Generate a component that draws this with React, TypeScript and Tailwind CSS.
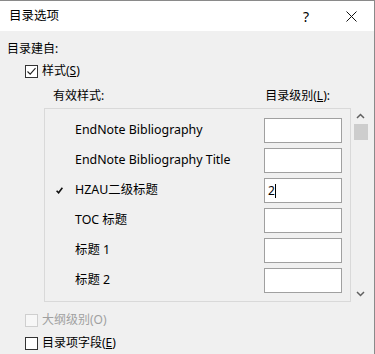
import React from 'react';

const font = { fontFamily: '"Noto Sans", "Noto Sans CJK SC", sans-serif' };

const rows = [
  { name: 'EndNote Bibliography', level: '', used: false },
  { name: 'EndNote Bibliography Title', level: '', used: false },
  { name: 'HZAU二级标题', level: '2', used: true },
  { name: 'TOC 标题', level: '', used: false },
  { name: '标题 1', level: '', used: false },
  { name: '标题 2', level: '', used: false },
];

const Checkbox = ({ checked, disabled }: { checked?: boolean; disabled?: boolean }) => (
  <div
    className={
      'w-[13px] h-[13px] border flex items-center justify-center ' +
      (disabled ? 'border-[#cfcfcf] bg-[#f7f7f7]' : 'border-[#333333] bg-white')
    }
  >
    {checked && (
      <svg width="11" height="11" viewBox="0 0 11 11">
        <path d="M1.5 5.5 L4.2 8.2 L9.5 2.2" fill="none" stroke="#222" strokeWidth="1.1" />
      </svg>
    )}
  </div>
);

const App = () => {
  return (
    <div
      className="w-[375px] h-[354px] bg-[#f0f0f0] border-r border-t border-[#8a8a8a] overflow-hidden text-[12px] text-black flex flex-col"
      style={font}
    >
      <div className="h-[30px] bg-white flex items-center pl-[9px] pr-[17px] shrink-0">
        <span className="text-[12.5px]">目录选项</span>
        <span className="ml-auto mr-[37px] text-[14px]">?</span>
        <svg width="11" height="11" viewBox="0 0 11 11">
          <path d="M0.5 0.5 L10.5 10.5 M10.5 0.5 L0.5 10.5" stroke="#111" strokeWidth="1" />
        </svg>
      </div>

      <div className="pl-[7px] mt-[10px] leading-[16px]">目录建自:</div>

      <div className="flex items-center h-[16px] mt-[6px] pl-[25px] gap-[4px]">
        <Checkbox checked />
        <span>
          样式(<span className="underline">S</span>)
        </span>
      </div>

      <div className="flex h-[16px] items-center mt-[9px] pl-[53px]">
        <span>有效样式:</span>
        <span className="ml-[161px]">
          目录级别(<span className="underline">L</span>):
        </span>
      </div>

      <div className="flex mt-[4px] ml-[44px]">
        <div className="w-[307px] h-[194px] border border-[#d9d9d9] pt-[9px] flex flex-col gap-[5px] overflow-hidden">
          {rows.map((r) => (
            <div key={r.name} className="flex items-center h-[25px] shrink-0">
              <div className="w-[30px] pl-[11px] flex items-center">
                {r.used && (
                  <svg width="7" height="7" viewBox="0 0 7 7">
                    <path d="M0.6 3.8 L2.6 5.8 L6.4 0.8" fill="none" stroke="#111" strokeWidth="1.6" />
                  </svg>
                )}
              </div>
              <span className="flex-1 text-[12.4px]">{r.name}</span>
              <div className="w-[78px] h-[25px] border border-[#a0a0a0] bg-white mr-[8px] flex items-center pl-[3px]">
                {r.level && (
                  <>
                    <span>{r.level}</span>
                    <span className="w-px h-[14px] bg-black" />
                  </>
                )}
              </div>
            </div>
          ))}
        </div>

        <div className="w-[17px] h-[194px] ml-[1px] flex flex-col items-center">
          <div className="h-[16px] flex items-center justify-center">
            <svg width="9" height="6" viewBox="0 0 9 6">
              <path d="M1 5 L4.5 1.5 L8 5" fill="none" stroke="#606060" strokeWidth="1.5" />
            </svg>
          </div>
          <div className="w-[14px] h-[16px] bg-[#cdcdcd]" />
          <div className="mt-auto h-[16px] flex items-center justify-center">
            <svg width="9" height="6" viewBox="0 0 9 6">
              <path d="M1 1 L4.5 4.5 L8 1" fill="none" stroke="#606060" strokeWidth="1.5" />
            </svg>
          </div>
        </div>
      </div>

      <div className="flex items-center h-[16px] mt-[10px] pl-[25px] gap-[4px] text-[#a0a0a0]">
        <Checkbox disabled />
        <span>大纲级别(O)</span>
      </div>

      <div className="flex items-center h-[16px] mt-[7px] pl-[25px] gap-[4px]">
        <Checkbox />
        <span>
          目录项字段(<span className="underline">E</span>)
        </span>
      </div>
    </div>
  );
};

export default App;
